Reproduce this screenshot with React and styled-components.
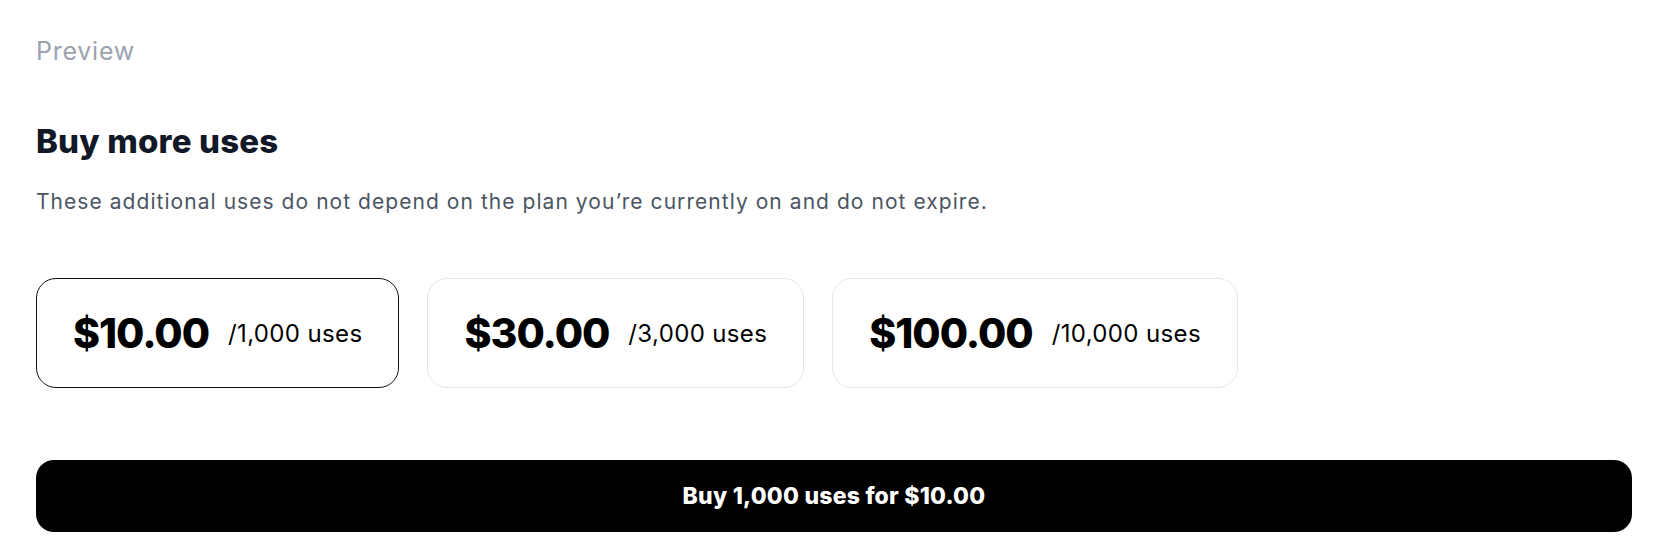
import React, { useState } from 'react'
import styled, { createGlobalStyle } from 'styled-components'

const GlobalStyle = createGlobalStyle`
  body {
    margin: 0;
    background: #fff;
    font-family: Inter, "Noto Sans", sans-serif;
    -webkit-font-smoothing: antialiased;
  }
`

const packs = [
  { price: 10, uses: 1000 },
  { price: 30, uses: 3000 },
  { price: 100, uses: 10000 },
]

const money = (n) => '$' + n.toFixed(2)
const count = (n) => n.toLocaleString('en-US')

const App = () => {
  const [selected, setSelected] = useState(0)
  const pack = packs[selected]

  return (
    <Page>
      <GlobalStyle />
      <Label>Preview</Label>

      <Title>Buy more uses</Title>
      <Description>
        These additional uses do not depend on the plan you’re currently on and do not expire.
      </Description>

      <Options>
        {packs.map((p, i) => (
          <Option key={p.price} active={i === selected} onClick={() => setSelected(i)}>
            <Price>{money(p.price)}</Price>
            <Per>/{count(p.uses)} uses</Per>
          </Option>
        ))}
      </Options>

      <BuyButton>
        Buy {count(pack.uses)} uses for {money(pack.price)}
      </BuyButton>
    </Page>
  )
}

export default App

const Page = styled.div`
  padding: 35px 38px 28px 36px;
  display: flex;
  flex-direction: column;
`
const Label = styled.div`
  font-size: 25px;
  line-height: 32px;
  letter-spacing: 0.03em;
  color: #9ca3af;
  margin-bottom: 56px;
`
const Title = styled.h2`
  margin: 0 0 29px;
  font-size: 33px;
  line-height: 36px;
  font-weight: 800;
  letter-spacing: 0.005em;
  color: #111827;
`
const Description = styled.p`
  margin: 0 0 62px;
  font-size: 21px;
  line-height: 28px;
  letter-spacing: 0.05em;
  color: #4b5563;
`
const Options = styled.div`
  display: flex;
  gap: 28px;
  margin-bottom: 72px;
`
const Option = styled.button`
  box-sizing: border-box;
  height: 110px;
  padding: 0 36px;
  display: flex;
  align-items: center;
  justify-content: center;
  gap: 19px;
  background: #fff;
  border: 1px solid ${(p) => (p.active ? '#111' : '#e5e7eb')};
  border-radius: 20px;
  cursor: pointer;
  font-family: inherit;
  color: #000;
`
const Price = styled.span`
  font-size: 41px;
  line-height: 48px;
  font-weight: 800;
  letter-spacing: -0.025em;
`
const Per = styled.span`
  font-size: 24px;
  font-weight: 400;
  letter-spacing: 0.015em;
`
const BuyButton = styled.button`
  box-sizing: border-box;
  height: 72px;
  width: 100%;
  border: none;
  border-radius: 18px;
  background: #000;
  color: #fff;
  font-family: inherit;
  font-size: 23px;
  font-weight: 800;
  letter-spacing: 0.01em;
  cursor: pointer;
`
